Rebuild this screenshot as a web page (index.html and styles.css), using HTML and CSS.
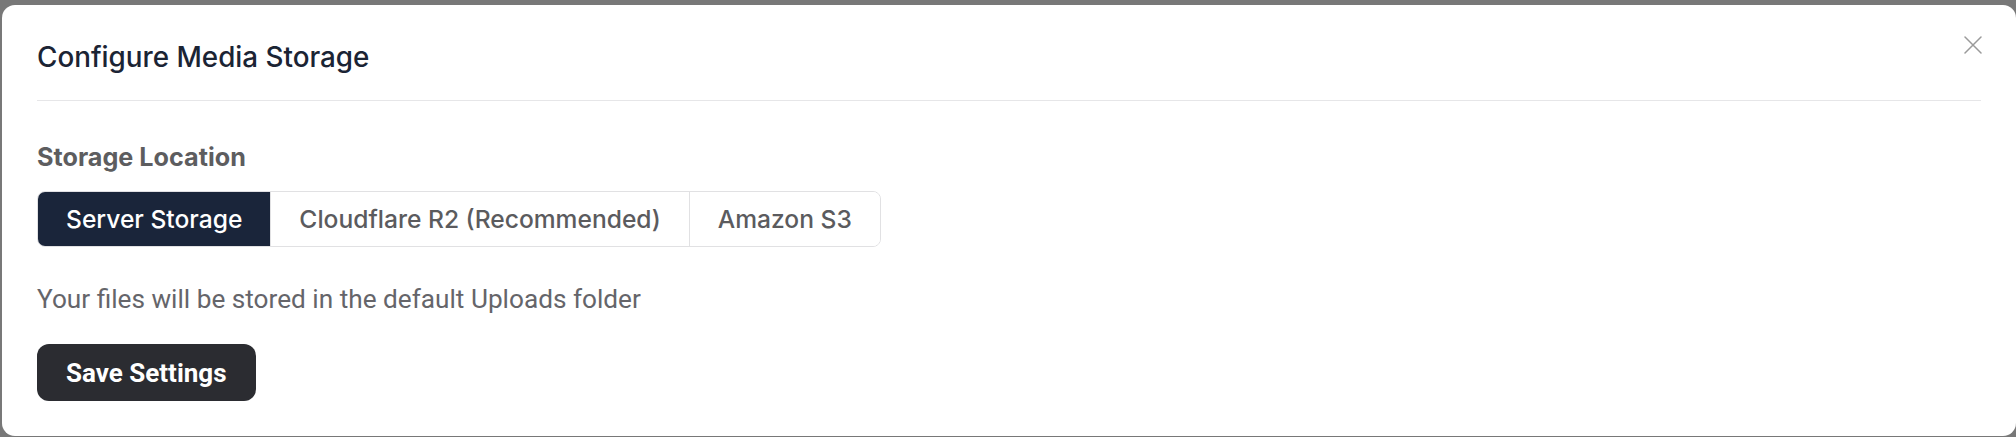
FILE: index.html
```html
<!DOCTYPE html>
<html lang="en">
<head>
<meta charset="utf-8">
<title>Configure Media Storage</title>
<link rel="stylesheet" href="styles.css">
</head>
<body>
<div class="overlay">
  <div class="modal">
    <div class="modal-header">
      <h2 class="modal-title">Configure Media Storage</h2>
      <button class="close-btn" aria-label="Close">
        <svg viewBox="0 0 18 18" width="18" height="18"><path d="M1 1 L17 17 M17 1 L1 17" stroke="currentColor" stroke-width="1.5" fill="none" stroke-linecap="round"/></svg>
      </button>
    </div>
    <div class="modal-body">
      <div class="field-label">Storage Location</div>
      <div class="segmented">
        <button class="seg seg-active">Server Storage</button>
        <button class="seg">Cloudflare R2 (Recommended)</button>
        <button class="seg">Amazon S3</button>
      </div>
      <p class="description">Your files will be stored in the default Uploads folder</p>
      <button class="save-btn">Save Settings</button>
    </div>
  </div>
</div>
</body>
</html>
```
FILE: styles.css
```css
* { box-sizing: border-box; }
html, body { margin: 0; padding: 0; }
body {
  background: #787878;
  font-family: Inter, "Noto Sans", sans-serif;
  height: 437px;
  overflow: hidden;
}
.overlay {
  padding: 5px 0 0 2px;
  height: 437px;
}
.modal {
  background: #ffffff;
  border-radius: 13px;
  height: 431px;
  padding: 0 35px;
  position: relative;
}
.modal-header {
  padding-top: 34px;
  padding-bottom: 24px;
  border-bottom: 1px solid #e6e6e8;
}
.modal-title {
  margin: 0;
  font-size: 27.8px;
  line-height: 37px;
  font-weight: 500;
  color: #1b2434;
}
.close-btn {
  position: absolute;
  top: 28px;
  right: 31px;
  width: 24px;
  height: 24px;
  padding: 3px;
  border: 0;
  background: transparent;
  color: #9a9a9a;
  display: flex;
  align-items: center;
  justify-content: center;
}
.modal-body {
  padding-top: 41px;
}
.field-label {
  font-size: 25.2px;
  line-height: 31px;
  font-weight: 700;
  color: #5d5d5f;
}
.segmented {
  margin-top: 18px;
  display: inline-flex;
  border: 1px solid #e1e1e3;
  border-radius: 8px;
  overflow: hidden;
  height: 56px;
}
.seg {
  font-family: Inter, "Noto Sans", sans-serif;
  font-size: 24.6px;
  font-weight: 500;
  color: #5b5b5e;
  background: #ffffff;
  border: 0;
  border-left: 1px solid #e1e1e3;
  padding: 0 28px;
  margin: 0;
  height: 100%;
}
.seg:first-child { border-left: 0; }
.seg-active {
  background: #1a253a;
  color: #ffffff;
}
.description {
  margin: 37px 0 0;
  font-family: Roboto, "Liberation Sans", sans-serif;
  font-size: 26.2px;
  line-height: 30px;
  color: #65656a;
}
.save-btn {
  margin-top: 30px;
  display: block;
  height: 57px;
  padding: 0 29px;
  border: 0;
  border-radius: 12px;
  background: #2b2c31;
  color: #ffffff;
  font-family: Roboto, "Liberation Sans", sans-serif;
  font-size: 26px;
  font-weight: 700;
}
```
